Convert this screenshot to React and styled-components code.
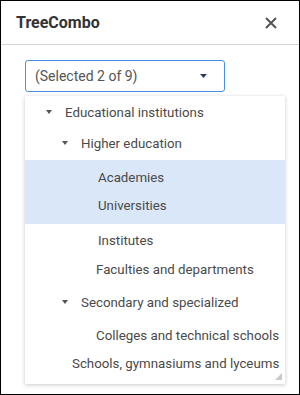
import React from 'react';
import styled, { createGlobalStyle } from 'styled-components';

const GlobalStyle = createGlobalStyle`
  html, body {
    margin: 0;
    padding: 0;
    background: #fff;
  }
  * { box-sizing: border-box; }
`;

const items = [
  { label: 'Educational institutions', pad: 21, caret: true, dy: 0 },
  { label: 'Higher education', pad: 37, caret: true, dy: -1 },
  { label: 'Academies', pad: 73, selected: true, dy: 1 },
  { label: 'Universities', pad: 73, selected: true, dy: -3 },
  { label: 'Institutes', pad: 73, dy: 0 },
  { label: 'Faculties and departments', pad: 71, dy: -3 },
  { label: 'Secondary and specialized', pad: 37, caret: true, dy: -2 },
  { label: 'Colleges and technical schools', pad: 71, dy: -1 },
  { label: 'Schools, gymnasiums and lyceums', pad: 47, dy: -5 },
];

const App = () => {
  return (
    <>
      <GlobalStyle />
      <Window>
        <Header>
          <Title>TreeCombo</Title>
          <CloseButton aria-label="close">
            <svg width="12" height="12" viewBox="0 0 12 12">
              <path d="M1 1L11 11M11 1L1 11" stroke="#555" strokeWidth="2" />
            </svg>
          </CloseButton>
        </Header>
        <Body>
          <ComboWrap>
            <Combo>
              <ComboText>(Selected 2 of 9)</ComboText>
              <svg width="7" height="4" viewBox="0 0 7 4">
                <path d="M0 0H7L3.5 4Z" fill="#2f3e5c" />
              </svg>
            </Combo>
            <Popup>
              {items.map((it) => (
                <Row key={it.label} pad={it.pad} selected={it.selected} dy={it.dy}>
                  {it.caret && (
                    <Caret viewBox="0 0 6 4">
                      <path d="M0 0H6L3 4Z" fill="#555" />
                    </Caret>
                  )}
                  {it.label}
                </Row>
              ))}
              <Grip viewBox="0 0 7 7">
                <path d="M7 0V7H0Z" fill="#c8c8c8" />
              </Grip>
            </Popup>
          </ComboWrap>
        </Body>
      </Window>
    </>
  );
};

const Window = styled.div`
  width: 300px;
  height: 395px;
  border: 1px solid #000;
  font-family: Roboto, "Liberation Sans", sans-serif;
  background: #fff;
`;

const Header = styled.div`
  height: 44px;
  border-bottom: 1px solid #d4d4d4;
  display: flex;
  align-items: center;
  justify-content: space-between;
  padding: 0 20px 0 15px;
`;

const Title = styled.div`
  font-size: 16px;
  font-weight: 700;
  color: #333;
  margin-top: -1px;
`;

const CloseButton = styled.div`
  display: flex;
  align-items: center;
  justify-content: center;
  width: 16px;
  height: 16px;
`;

const Body = styled.div`
  padding: 15px 0 0 24px;
`;

const ComboWrap = styled.div`
  position: relative;
  width: 200px;
`;

const Combo = styled.div`
  height: 32px;
  border: 1px solid #4a8fe7;
  border-radius: 3px;
  display: flex;
  align-items: center;
  justify-content: space-between;
  padding: 0 17px 0 9px;
`;

const ComboText = styled.span`
  font-size: 14px;
  color: #555;
`;

const Popup = styled.div`
  position: absolute;
  top: 36px;
  left: 0;
  width: 260px;
  background: #fff;
  box-shadow: 0 1px 4px rgba(0, 0, 0, 0.22);
`;

const Row = styled.div`
  height: 32px;
  display: flex;
  align-items: center;
  padding-left: ${(p) => p.pad}px;
  padding-bottom: ${(p) => Math.max(0, -p.dy * 2)}px;
  padding-top: ${(p) => Math.max(0, p.dy * 2)}px;
  background: ${(p) => (p.selected ? '#dae7f8' : 'transparent')};
  font-size: 13.3px;
  color: #4a4a4a;
  white-space: nowrap;
`;

const Caret = styled.svg`
  width: 6px;
  height: 4px;
  margin-right: 13px;
  flex: none;
`;

const Grip = styled.svg`
  position: absolute;
  right: 3px;
  bottom: 4px;
  width: 7px;
  height: 7px;
`;

export default App;
